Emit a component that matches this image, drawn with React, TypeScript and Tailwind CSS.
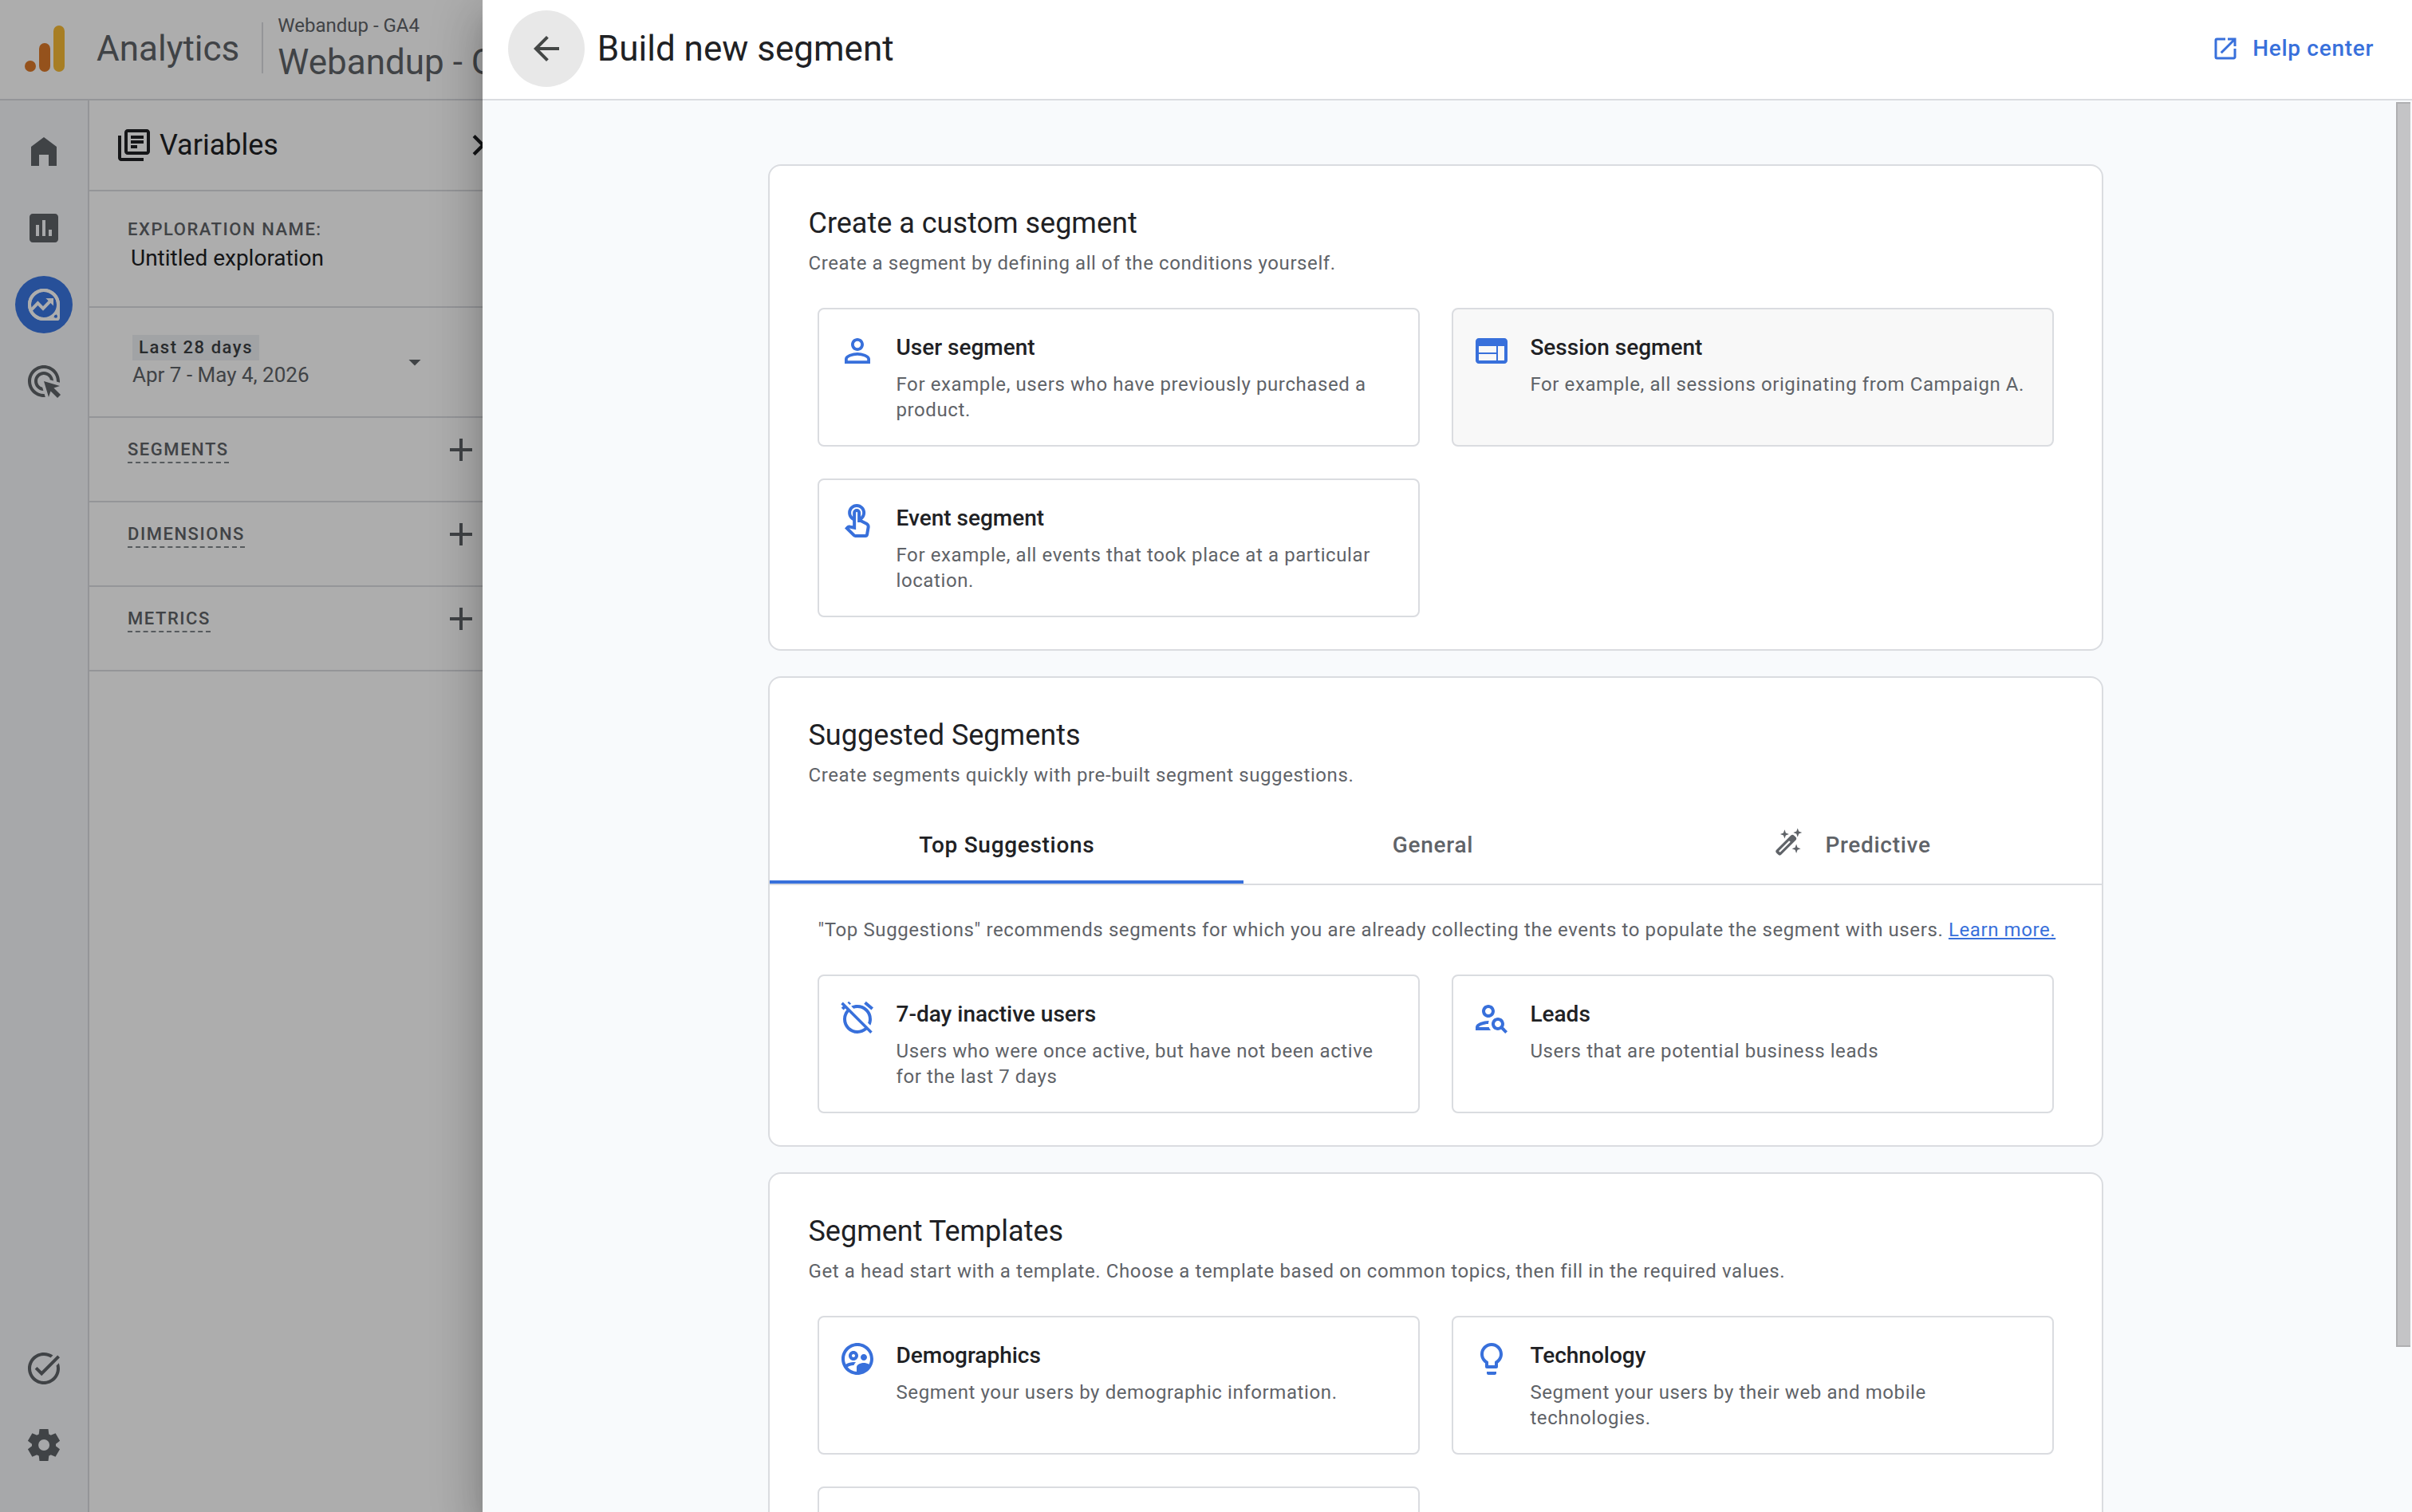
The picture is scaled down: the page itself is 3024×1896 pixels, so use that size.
import { useState } from "react";
import type { ComponentType, SVGProps } from "react";

import {
  MdAdd,
  MdAdsClick,
  MdAlarmOff,
  MdArrowBack,
  MdArrowDropDown,
  MdAssessment,
  MdChevronRight,
  MdLightbulbOutline,
  MdOpenInNew,
  MdOutlineLibraryBooks,
  MdOutlinePersonSearch,
  MdOutlineSupervisedUserCircle,
  MdOutlineTouchApp,
  MdPersonOutline,
  MdTaskAlt,
  MdWeb,
} from "react-icons/md";

type Icon = ComponentType<{ className?: string }>;

interface Segment {
  icon: Icon;
  title: string;
  description: string;
  active?: boolean;
}

const customSegments: Segment[] = [
  {
    icon: MdPersonOutline,
    title: "User segment",
    description: "For example, users who have previously purchased a product.",
  },
  {
    icon: MdWeb,
    title: "Session segment",
    description: "For example, all sessions originating from Campaign A.",
    active: true,
  },
  {
    icon: MdOutlineTouchApp,
    title: "Event segment",
    description: "For example, all events that took place at a particular location.",
  },
];

const suggestedSegments: Segment[] = [
  {
    icon: MdAlarmOff,
    title: "7-day inactive users",
    description: "Users who were once active, but have not been active for the last 7 days",
  },
  {
    icon: MdOutlinePersonSearch,
    title: "Leads",
    description: "Users that are potential business leads",
  },
];

const templateSegments: Segment[] = [
  {
    icon: MdOutlineSupervisedUserCircle,
    title: "Demographics",
    description: "Segment your users by demographic information.",
  },
  {
    icon: MdLightbulbOutline,
    title: "Technology",
    description: "Segment your users by their web and mobile technologies.",
  },
];

function Logo() {
  return (
    <svg viewBox="0 0 50 58" className="h-[58px] w-[50px] shrink-0" aria-hidden="true">
      <rect x="36" y="0" width="14" height="58" rx="7" fill="#f7ba35" />
      <rect x="18" y="22" width="14" height="36" rx="7" fill="#dc7a2a" />
      <circle cx="7" cy="51" r="7" fill="#dc7a2a" />
    </svg>
  );
}

function HomeIcon(props: SVGProps<SVGSVGElement>) {
  return (
    <svg viewBox="0 0 24 24" fill="currentColor" {...props}>
      <path d="M4 21V9l8-6 8 6v12h-5v-7H9v7Z" />
    </svg>
  );
}

function ExploreIcon(props: SVGProps<SVGSVGElement>) {
  return (
    <svg viewBox="0 0 24 24" fill="none" stroke="currentColor" strokeWidth="2" {...props}>
      <path d="M12 3a9 9 0 1 0 0 18h8.2a.8.8 0 0 0 .8-.8V12a9 9 0 0 0-9-9Z" />
      <path d="M12 3a9 9 0 1 0 0 18 9 9 0 0 0 9-9 9 9 0 0 0-9-9Z" />
      <path d="M4 15.4l4.2-4.3 3.3 3.3 5.2-5.3" />
      <path d="M13.2 8H18v4.8Z" fill="currentColor" stroke="none" />
      <circle cx="19.5" cy="19.4" r="1" fill="#3a76e2" stroke="none" />
    </svg>
  );
}

function GearIcon(props: SVGProps<SVGSVGElement>) {
  return (
    <svg viewBox="0 0 24 24" fill="currentColor" {...props}>
      <path d="m9.25 22-.4-3.2q-.325-.125-.612-.3-.288-.175-.563-.375L4.7 19.375l-2.75-4.75 2.575-1.95Q4.5 12.5 4.5 12.337v-.675q0-.162.025-.337L1.95 9.375l2.75-4.75 2.975 1.25q.275-.2.575-.375.3-.175.6-.3L9.25 2h5.5l.4 3.2q.325.125.613.3.287.175.562.375l2.975-1.25 2.75 4.75-2.575 1.95q.025.175.025.337v.675q0 .163-.05.338l2.575 1.95-2.75 4.75-2.95-1.25q-.275.2-.575.375-.3.175-.6.3l-.4 3.2Zm2.8-6.5q1.45 0 2.475-1.025Q15.55 13.45 15.55 12q0-1.45-1.025-2.475Q13.5 8.5 12.05 8.5q-1.475 0-2.488 1.025Q8.55 10.55 8.55 12q0 1.45 1.012 2.475Q10.575 15.5 12.05 15.5Z" />
    </svg>
  );
}

function WandIcon(props: SVGProps<SVGSVGElement>) {
  return (
    <svg viewBox="0 0 24 24" fill="currentColor" {...props}>
      <path d="M9.5 3.4l.8 2.3 2.2.8-2.2.8-.8 2.3-.8-2.3-2.2-.8 2.2-.8Z" />
      <path d="M18.4 2.4l.8 2.3 2.2.8-2.2.8-.8 2.3-.8-2.3-2.2-.8 2.2-.8Z" />
      <path d="M17.5 13.4l.8 2.3 2.2.8-2.2.8-.8 2.3-.8-2.3-2.2-.8 2.2-.8Z" />
      <path
        fillRule="evenodd"
        d="M13.7 7.5a1.6 1.6 0 0 1 2.3 0l1 1a1.6 1.6 0 0 1 0 2.3L7.3 20.5a1.6 1.6 0 0 1-2.3 0l-1-1a1.6 1.6 0 0 1 0-2.3ZM12.6 11 5.5 18.1l.9.9 7.1-7.1Z"
      />
    </svg>
  );
}

function RailItem({ icon: ItemIcon, label, current }: { icon: Icon; label: string; current?: boolean }) {
  return (
    <a href="#" aria-label={label} className="flex h-24 items-center justify-center">
      {current ? (
        <span className="flex size-[72px] items-center justify-center rounded-full bg-[#3a76e2] text-white">
          <ItemIcon className="size-12" />
        </span>
      ) : (
        <ItemIcon className="size-12 text-[#5f6368]" />
      )}
    </a>
  );
}

function VariableRow({ label }: { label: string }) {
  return (
    <div className="flex h-[106px] items-start justify-between border-b-2 border-[#dadce0] pt-4 pr-6 pl-12">
      <h3 className="mt-3 border-b-2 border-dashed border-[#80868b] pb-1 text-[22px] leading-[23px] font-medium tracking-[0.07em] text-[#5f6368]">
        {label}
      </h3>
      <button type="button" aria-label={`Add ${label.toLowerCase()}`}>
        <MdAdd className="size-12 text-[#5f6368]" />
      </button>
    </div>
  );
}

function SegmentTile({ segment }: { segment: Segment }) {
  const { icon: TileIcon, title, description, active } = segment;

  return (
    <button
      type="button"
      className={`flex items-start gap-6 rounded-lg border-2 border-[#dadce0] px-6 py-7 text-left ${
        active ? "bg-[#f8f8f8]" : "bg-white"
      }`}
    >
      <TileIcon className="size-12 shrink-0 text-[#3870db]" />
      <span className="flex flex-col gap-[10px]">
        <span className="text-[28px] leading-10 font-medium text-[#202124]">{title}</span>
        <span className="text-2xl tracking-wide text-[#5f6368]">{description}</span>
      </span>
    </button>
  );
}

function SegmentGrid({ segments, loading }: { segments: Segment[]; loading?: boolean }) {
  return (
    <div className="mx-[60px] mt-10 grid grid-cols-2 gap-10">
      {segments.map((segment) => (
        <SegmentTile key={segment.title} segment={segment} />
      ))}
      {loading && <div aria-busy="true" className="h-[174px] rounded-lg border-2 border-[#dadce0]" />}
    </div>
  );
}

function CardHeading({ title, subtitle }: { title: string; subtitle: string }) {
  return (
    <div className="px-12">
      <h2 className="text-4xl leading-[48px] text-[#202124]">{title}</h2>
      <p className="mt-[10px] text-2xl tracking-wide text-[#5f6368]">{subtitle}</p>
    </div>
  );
}

const tabs = ["Top Suggestions", "General", "Predictive"];

function SuggestionTabs() {
  const [selected, setSelected] = useState(tabs[0]);

  return (
    <div role="tablist" className="mt-6 flex border-b-2 border-[#dadce0]">
      {tabs.map((tab) => (
        <button
          key={tab}
          type="button"
          role="tab"
          aria-selected={tab === selected}
          onClick={() => setSelected(tab)}
          className={`flex h-24 flex-auto items-center justify-center border-b-4 pt-1 text-[28px] font-medium tracking-wide ${
            tab === selected ? "border-[#3870db] text-[#202124]" : "border-transparent text-[#5f6368]"
          }`}
        >
          {tab === "Predictive" && <WandIcon className="mr-6 mb-2 size-11" />}
          <span className={tab === "Predictive" ? "pr-7" : ""}>{tab}</span>
        </button>
      ))}
    </div>
  );
}

function AppHeader() {
  return (
    <header className="flex h-[126px] shrink-0 items-start border-b-2 border-[#dadce0] bg-white pl-[31px] text-[#5f6368]">
      <div className="flex h-[122px] items-center gap-10">
        <Logo />
        <span className="text-[44px]">Analytics</span>
      </div>
      <div className="mt-7 ml-7 h-16 w-[2px] bg-[#dadce0]" />
      <div className="ml-[18px] flex flex-col pt-4 whitespace-nowrap">
        <span className="text-2xl">Webandup - GA4</span>
        <span className="text-[44px] leading-[60px]">Webandup - GA4</span>
      </div>
    </header>
  );
}

function VariablesPanel() {
  return (
    <section className="w-[514px]">
      <div className="flex h-[114px] items-center border-b-2 border-[#dadce0] pl-8 text-[#202124]">
        <MdOutlineLibraryBooks className="size-12" />
        <h2 className="ml-2 text-4xl">Variables</h2>
        <button type="button" aria-label="Collapse variables" className="ml-auto">
          <MdChevronRight className="size-[52px]" />
        </button>
      </div>

      <div className="h-[146px] border-b-2 border-[#dadce0] pt-8 pl-12">
        <label
          htmlFor="exploration-name"
          className="block text-[22px] leading-8 font-medium tracking-[0.07em] text-[#5f6368]"
        >
          EXPLORATION NAME:
        </label>
        <input
          id="exploration-name"
          defaultValue="Untitled exploration"
          className="block h-10 w-80 pl-1 text-[28px] text-[#202124]"
        />
      </div>

      <button
        type="button"
        className="flex h-[138px] w-full items-center border-b-2 border-[#dadce0] pl-[54px] text-left"
      >
        <span className="flex w-[336px] flex-col items-start">
          <span className="bg-[#eef1f3] px-2 text-[22px] leading-8 font-medium tracking-[0.07em] text-[#3c4043]">
            Last 28 days
          </span>
          <span className="text-[26px] leading-[36px] text-[#5f6368]">Apr 7 - May 4, 2026</span>
        </span>
        <MdArrowDropDown className="size-9 text-[#5f6368]" />
      </button>

      <VariableRow label="SEGMENTS" />
      <VariableRow label="DIMENSIONS" />
      <VariableRow label="METRICS" />
    </section>
  );
}

function BuildSegmentDrawer() {
  return (
    <aside
      role="dialog"
      aria-label="Build new segment"
      className="absolute inset-y-0 right-0 flex w-4/5 flex-col bg-[#f8fafc] shadow-[0_16px_20px_-10px_rgba(0,0,0,0.2),0_32px_48px_4px_rgba(0,0,0,0.14),0_12px_60px_10px_rgba(0,0,0,0.12)]"
    >
      <header className="flex h-[126px] shrink-0 items-center border-b-2 border-[#dadce0] bg-white pr-12 pb-[2px] pl-8">
        <button
          type="button"
          aria-label="Back"
          className="flex size-24 items-center justify-center rounded-full bg-[#e8e8e8] text-[#444746]"
        >
          <MdArrowBack className="size-12" />
        </button>
        <h1 className="ml-4 text-[44px] text-[#202124]">Build new segment</h1>
        <a href="#" className="ml-auto flex items-center gap-4 text-[28px] font-medium tracking-wide text-[#3870db]">
          <MdOpenInNew className="size-9" />
          Help center
        </a>
      </header>

      <div className="flex min-h-0 flex-1">
        <main className="flex-1 overflow-hidden pt-20">
          <div className="mx-auto flex w-[70%] flex-col gap-8">
            <section className="rounded-2xl border-2 border-[#dadce0] bg-white pt-12 pb-10">
              <CardHeading
                title="Create a custom segment"
                subtitle="Create a segment by defining all of the conditions yourself."
              />
              <SegmentGrid segments={customSegments} />
            </section>

            <section className="rounded-2xl border-2 border-[#dadce0] bg-white pt-12 pb-10">
              <CardHeading
                title="Suggested Segments"
                subtitle="Create segments quickly with pre-built segment suggestions."
              />
              <SuggestionTabs />
              <p className="mx-[60px] mt-10 text-2xl tracking-wide whitespace-nowrap text-[#5f6368]">
                "Top Suggestions" recommends segments for which you are already collecting the events to populate the
                segment with users.{" "}
                <a href="#" className="text-[#3870db] underline">
                  Learn more.
                </a>
              </p>
              <SegmentGrid segments={suggestedSegments} />
            </section>

            <section className="rounded-2xl border-2 border-[#dadce0] bg-white pt-12 pb-10">
              <CardHeading
                title="Segment Templates"
                subtitle="Get a head start with a template. Choose a template based on common topics, then fill in the required values."
              />
              <SegmentGrid segments={templateSegments} loading />
            </section>
          </div>
        </main>

        {/* scroll track */}
        <div className="w-7 shrink-0 pt-[2px] pr-[2px] pl-2">
          <div className="h-[88.3%] border-t-2 border-b-2 border-l-2 border-[#afafb1] bg-[#c4c4c6]" />
        </div>
      </div>
    </aside>
  );
}

export default function App() {
  return (
    <div className="relative flex h-screen flex-col overflow-hidden bg-white font-['Roboto',sans-serif]">
      <AppHeader />
      <div className="flex min-h-0 flex-1">
        <nav className="flex w-28 shrink-0 flex-col justify-between border-r-2 border-[#dadce0] bg-[#f6f8fb] pt-4 pb-9">
          <div>
            <RailItem icon={HomeIcon} label="Home" />
            <RailItem icon={MdAssessment} label="Reports" />
            <RailItem icon={ExploreIcon} label="Explore" current />
            <RailItem icon={MdAdsClick} label="Advertising" />
          </div>
          <div>
            <RailItem icon={MdTaskAlt} label="Tasks" />
            <RailItem icon={GearIcon} label="Admin" />
          </div>
        </nav>
        <VariablesPanel />
      </div>

      <div className="absolute inset-0 bg-black/32" />
      <BuildSegmentDrawer />
    </div>
  );
}
